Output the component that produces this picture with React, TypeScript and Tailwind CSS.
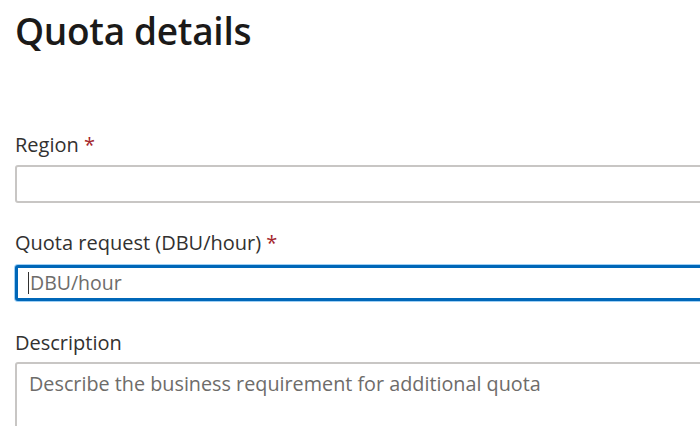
export default function App() {
  return (
    <div className="h-[426px] w-[700px] overflow-hidden bg-white pl-[15px] font-['Open_Sans',sans-serif] text-[#323130]">
      <h1 className="pt-[7px] text-[37px] leading-[48px] font-semibold tracking-[-0.3px] text-[#1b1a19]">
        Quota details
      </h1>

      <div className="mt-[77px] flex flex-col">
        <label className="text-[20px] leading-[26px]">
          Region <span className="text-[#a4262c]">*</span>
        </label>
        <div className="mt-[7px] h-[38px] w-[720px] rounded-[3px] border-2 border-[#c8c6c4] bg-white" />

        <label className="mt-[27px] text-[20px] leading-[26px]">
          Quota request (DBU/hour) <span className="text-[#a4262c]">*</span>
        </label>
        <div className="mt-[9px] flex h-[36px] w-[720px] items-center rounded-[3px] border-[3px] border-[#0067b8] bg-white pl-[10px] shadow-[0_0_0_1px_#9fd0f5]">
          <span className="mr-[1px] h-[22px] w-[1px] bg-[#323130]" />
          <span className="text-[19.5px] text-[#6e6c6a]">DBU/hour</span>
        </div>

        <label className="mt-[29px] text-[20px] leading-[26px]">Description</label>
        <div className="mt-[6px] h-[90px] w-[720px] rounded-[3px] border-2 border-[#c8c6c4] bg-white px-[12px] pt-[5px]">
          <span className="text-[19.8px] text-[#6e6c6a]">
            Describe the business requirement for additional quota
          </span>
        </div>
      </div>
    </div>
  );
}
